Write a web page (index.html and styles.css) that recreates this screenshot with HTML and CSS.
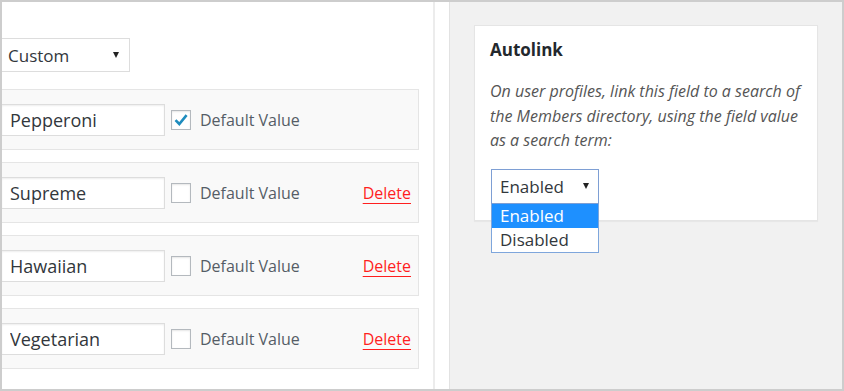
FILE: index.html
```html
<!DOCTYPE html>
<html lang="en">
<head>
<meta charset="utf-8">
<title>Field options</title>
<link rel="stylesheet" href="styles.css">
</head>
<body>
<div class="frame">
  <section class="fields">
    <div class="type-select"><span class="select-value">Custom</span><span class="arrow"></span></div>
    <div class="options">
      <div class="opt-row">
        <input class="opt-input" type="text" value="Pepperoni">
        <span class="check"><svg class="tick" viewBox="0 0 20 20" width="20" height="20"><path d="M4.5 10.2 L8.3 14 L15.6 5.2" fill="none" stroke="#1e8cbe" stroke-width="2.6"/></svg></span>
        <span class="check-label">Default Value</span>
      </div>
      <div class="opt-row">
        <input class="opt-input" type="text" value="Supreme">
        <span class="check"></span>
        <span class="check-label">Default Value</span>
        <a class="delete" href="#">Delete</a>
      </div>
      <div class="opt-row">
        <input class="opt-input" type="text" value="Hawaiian">
        <span class="check"></span>
        <span class="check-label">Default Value</span>
        <a class="delete" href="#">Delete</a>
      </div>
      <div class="opt-row">
        <input class="opt-input" type="text" value="Vegetarian">
        <span class="check"></span>
        <span class="check-label">Default Value</span>
        <a class="delete" href="#">Delete</a>
      </div>
    </div>
  </section>
  <div class="gutter"></div>
  <aside class="sidebar">
    <div class="card">
      <h3 class="card-title">Autolink</h3>
      <p class="card-desc">On user profiles, link this field to a search of the Members directory, using the field value as a search term:</p>
      <div class="dropdown">
        <div class="dd-select"><span class="select-value">Enabled</span><span class="arrow"></span></div>
        <ul class="dd-list">
          <li class="dd-option active">Enabled</li>
          <li class="dd-option">Disabled</li>
        </ul>
      </div>
    </div>
  </aside>
</div>
</body>
</html>
```
FILE: styles.css
```css
* { box-sizing: border-box; }
html, body { margin: 0; padding: 0; background: #fff; }
body { font-family: "Open Sans", "Noto Sans", sans-serif; color: #32373c; }

.frame {
  width: 844px;
  height: 391px;
  border: 2px solid #cdcdcd;
  display: flex;
  overflow: hidden;
}

.fields {
  flex: none;
  width: 433px;
  background: #fff;
  border-right: 2px solid #ececec;
  padding-top: 36px;
  overflow: hidden;
}

.type-select {
  margin-left: -3px;
  width: 131px;
  height: 34px;
  border: 1px solid #dddddd;
  background: #fff;
  padding: 0 10px 0 8px;
  display: flex;
  align-items: center;
  justify-content: space-between;
  font-size: 17px;
  color: #32373c;
}

.arrow {
  width: 0;
  height: 0;
  border-left: 3.5px solid transparent;
  border-right: 3.5px solid transparent;
  border-top: 6px solid #222;
}

.options {
  margin-top: 17px;
  margin-left: -13px;
  width: 430px;
  display: flex;
  flex-direction: column;
  gap: 12px;
}

.opt-row {
  height: 61px;
  border: 1px solid #e5e5e5;
  background: #f9f9f9;
  padding: 0 7px 0 11px;
  display: flex;
  align-items: center;
}

.opt-input {
  width: 164px;
  height: 32px;
  border: 1px solid #dddddd;
  background: #fff;
  box-shadow: inset 0 1px 2px rgba(0,0,0,0.07);
  padding: 0 8px;
  margin: 0;
  font-family: "Open Sans", "Noto Sans", sans-serif;
  font-size: 18px;
  color: #32373c;
  outline: none;
}

.check {
  width: 20px;
  height: 20px;
  margin-left: 6px;
  border: 1px solid #b4b9be;
  background: #fff;
  box-shadow: inset 0 1px 2px rgba(0,0,0,0.1);
  position: relative;
}

.tick {
  position: absolute;
  left: -1px;
  top: -1px;
}

.check-label {
  margin-left: 9px;
  font-size: 16px;
  color: #555d66;
}

.delete {
  margin-left: auto;
  font-size: 16px;
  color: #ff1f1f;
  text-decoration: underline;
  text-underline-offset: 4px;
  text-decoration-thickness: 1px;
}

.gutter {
  flex: none;
  width: 14px;
  background: #fff;
}

.sidebar {
  flex: 1;
  border-left: 1px solid #e2e2e2;
  background: #f1f1f1;
  padding: 23px 0 0 24px;
}

.card {
  width: 344px;
  height: 196px;
  background: #fff;
  border: 1px solid #e5e5e5;
  box-shadow: 0 1px 1px rgba(0,0,0,0.04);
  padding: 12px 15px 0 15px;
}

.card-title {
  margin: 0;
  font-size: 17px;
  font-weight: 700;
  line-height: 24px;
  color: #23282d;
}

.card-desc {
  margin: 17px 0 0 0;
  font-size: 16px;
  font-style: italic;
  line-height: 24.5px;
  color: #555;
}

.dropdown {
  position: relative;
  margin-top: 16px;
  margin-left: 1px;
  width: 108px;
}

.dd-select {
  height: 35px;
  border: 1px solid #7e9fd4;
  background: #fff;
  padding: 0 9px 0 8px;
  display: flex;
  align-items: center;
  justify-content: space-between;
  font-size: 17px;
  color: #32373c;
}

.dd-list {
  position: absolute;
  left: 0;
  top: 100%;
  width: 108px;
  margin: 0;
  padding: 0;
  list-style: none;
  background: #fff;
  border: 1px solid #7ea6dc;
  border-top: none;
}

.dd-option {
  height: 24px;
  line-height: 24px;
  padding-left: 8px;
  font-size: 17px;
  color: #32373c;
}

.dd-option.active {
  background: #1e90ff;
  color: #fff;
}
```
